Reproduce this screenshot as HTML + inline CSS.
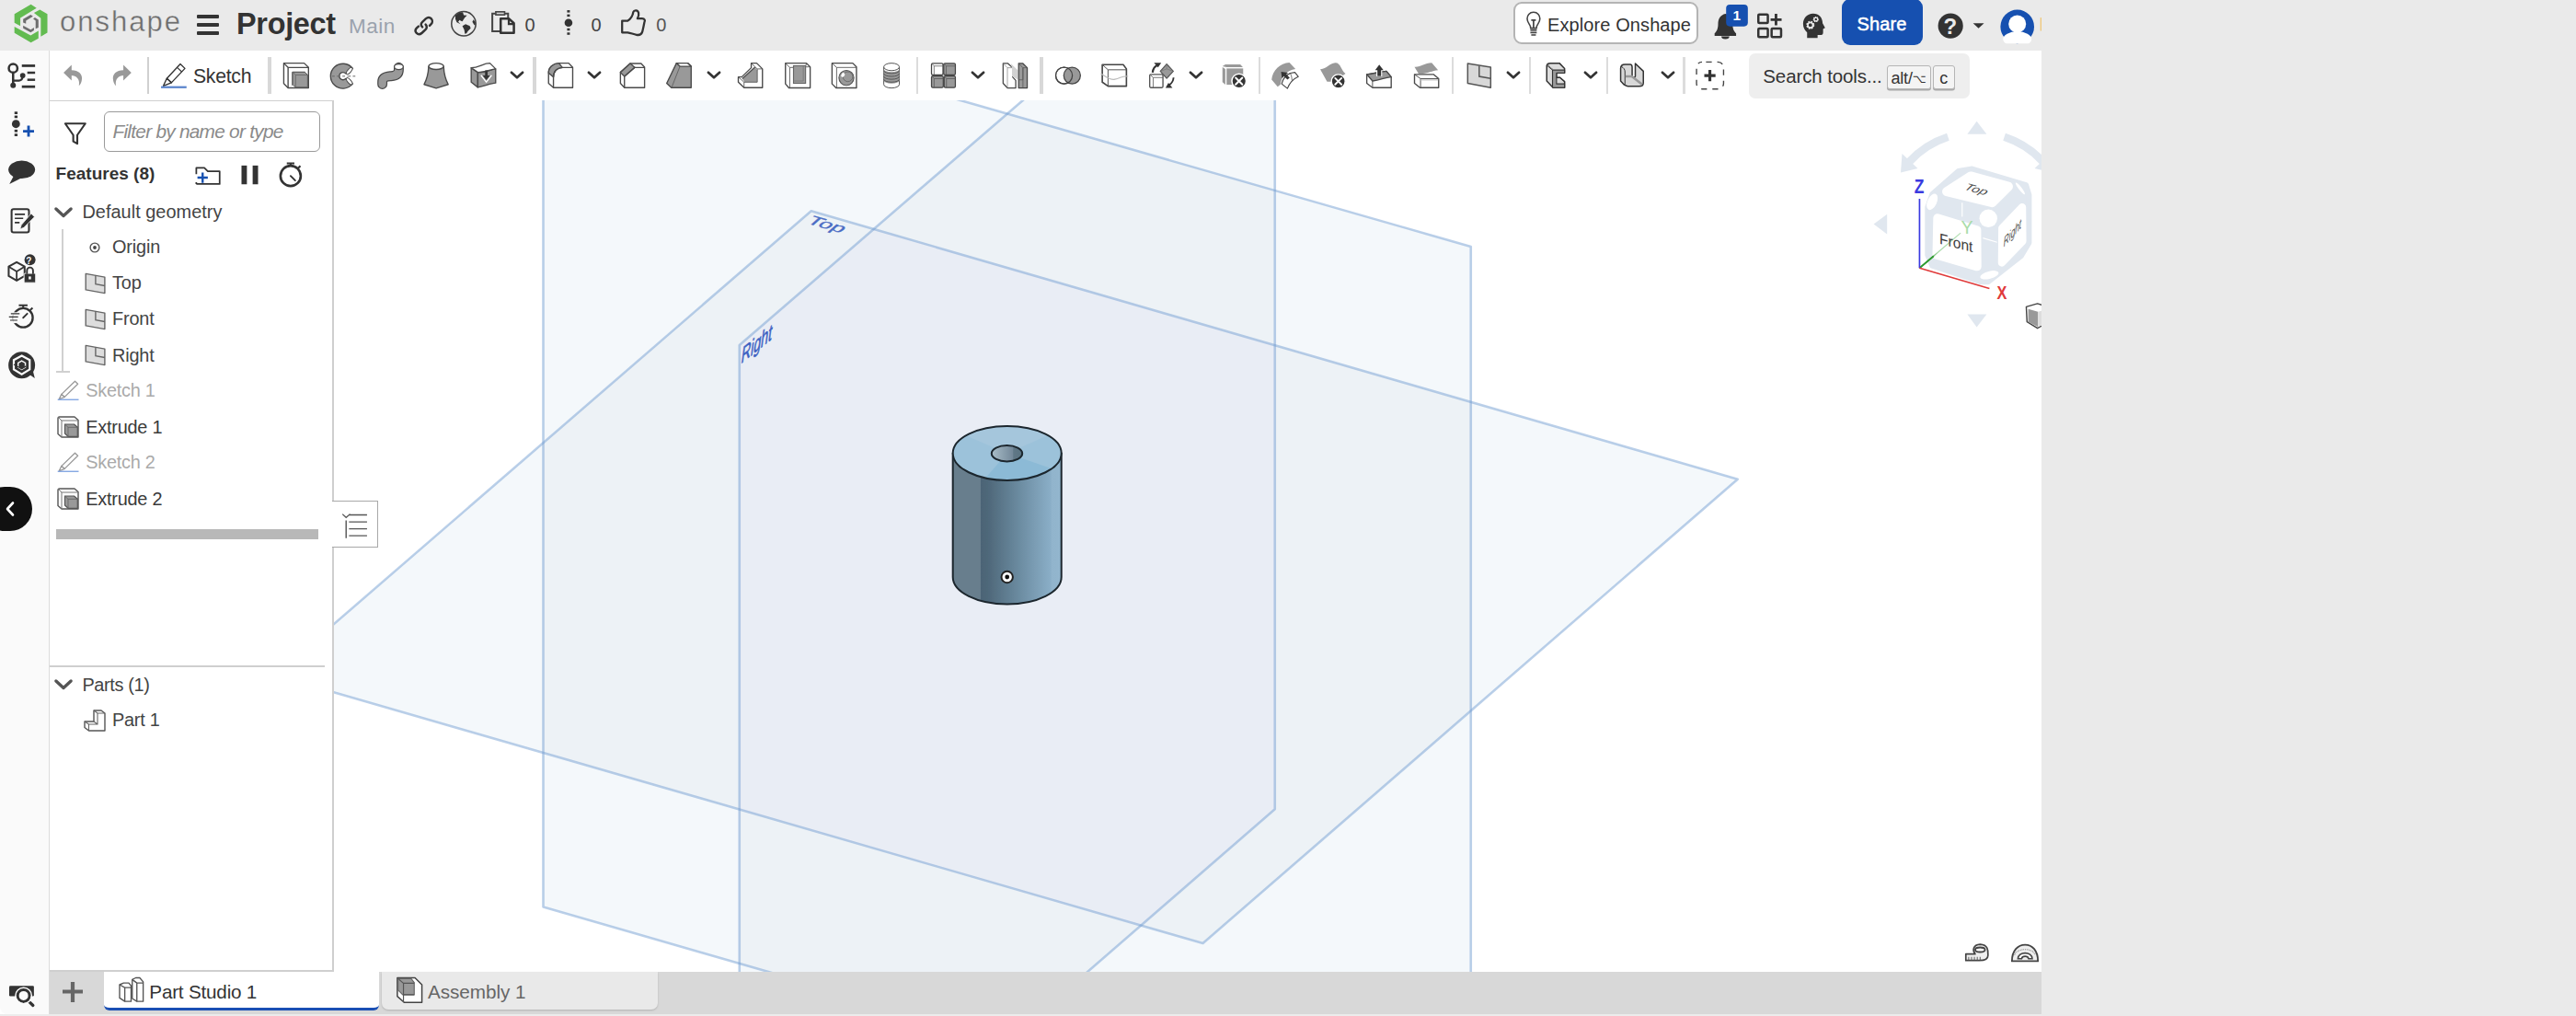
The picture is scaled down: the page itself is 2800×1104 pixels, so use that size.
<!DOCTYPE html>
<html lang="en">
<head>
<meta charset="utf-8">
<title>Project | Part Studio 1</title>
<style>
*{box-sizing:border-box;margin:0;padding:0}
html,body{width:2800px;height:1104px;overflow:hidden;background:#eaeaea}
body{font-family:"Liberation Sans",sans-serif;color:#333;position:relative}
.abs{position:absolute}
#app{position:absolute;left:0;top:0;width:2219px;height:1104px;background:#fff;overflow:hidden}
#header{position:absolute;left:0;top:0;width:2219px;height:55px;background:#eaeaea}
#toolbar{position:absolute;left:54px;top:55px;width:2165px;height:54px;background:#fff}
#sidebar{position:absolute;left:0;top:55px;width:54px;height:1047px;background:#fafafa;border-right:1.5px solid #dcdcdc;border-bottom-left-radius:8px}
#canvas{position:absolute;left:54px;top:109px;width:2165px;height:947px;background:#fff;overflow:hidden}
#panel{position:absolute;left:54px;top:109px;width:309px;height:947px;background:#fff;border:2px solid #cfcfcf;border-top-width:1px;border-left:none}
#tabbar{position:absolute;left:54px;top:1056px;width:2165px;height:46px;background:#d8d8d8}
#bottomstrip{position:absolute;left:0;top:1101.5px;width:2219px;height:3px;background:#ececec}
.t{position:absolute;white-space:nowrap;line-height:1}
svg{position:absolute;overflow:visible}
</style>
</head>
<body>
<div id="app">

<!-- CANVAS -->
<div id="canvas">
<svg id="scene" style="left:-54px;top:-109px" width="2219" height="1104" viewBox="0 0 2219 1104">
<defs>
<clipPath id="cT"><polygon points="881.75,229.25 1888.75,520.75 1307.50,1025.00 298.60,733.70"/></clipPath>
<clipPath id="cF"><polygon points="590.50,-20.90 1598.75,268.00 1598.75,1275.90 590.50,985.50"/></clipPath>
<clipPath id="cR"><polygon points="803.75,375.00 1385.75,-127.50 1385.75,879.25 803.75,1384.40"/></clipPath>
<linearGradient id="gSide" x1="0" x2="1" y1="0" y2="0">
<stop offset="0" stop-color="#687e8d"/><stop offset="0.252" stop-color="#687e8d"/>
<stop offset="0.258" stop-color="#4c6476"/><stop offset="0.32" stop-color="#4e6779"/>
<stop offset="0.6" stop-color="#6a8a9f"/><stop offset="0.9" stop-color="#8aaec7"/>
<stop offset="0.912" stop-color="#91b4cc"/><stop offset="1" stop-color="#93b6ce"/></linearGradient>
<linearGradient id="gHole" x1="0" x2="1" y1="0" y2="0">
<stop offset="0" stop-color="#a9bdc8"/><stop offset="0.68" stop-color="#74899a"/>
<stop offset="0.72" stop-color="#5f7786"/><stop offset="1" stop-color="#5a7281"/></linearGradient>
<clipPath id="cTopFace"><ellipse cx="1094.7" cy="492.4" rx="59" ry="29.5"/></clipPath>
<filter id="soft" x="-5%" y="-5%" width="110%" height="110%"><feGaussianBlur stdDeviation="0.55"/></filter>
<filter id="soft2" x="-5%" y="-5%" width="110%" height="110%"><feGaussianBlur stdDeviation="0.4"/></filter>
</defs>
<g id="planes">
<polygon points="590.50,-20.90 1598.75,268.00 1598.75,1275.90 590.50,985.50" fill="#f4f8fb"/>
<polygon points="881.75,229.25 1888.75,520.75 1307.50,1025.00 298.60,733.70" fill="#f4f8fb"/>
<polygon points="803.75,375.00 1385.75,-127.50 1385.75,879.25 803.75,1384.40" fill="#f4f8fb"/>
<polygon points="881.75,229.25 1888.75,520.75 1307.50,1025.00 298.60,733.70" fill="#edf2f6" clip-path="url(#cF)"/>
<polygon points="881.75,229.25 1888.75,520.75 1307.50,1025.00 298.60,733.70" fill="#edf2f6" clip-path="url(#cR)"/>
<polygon points="590.50,-20.90 1598.75,268.00 1598.75,1275.90 590.50,985.50" fill="#edf2f6" clip-path="url(#cR)"/>
<g clip-path="url(#cF)"><polygon points="881.75,229.25 1888.75,520.75 1307.50,1025.00 298.60,733.70" fill="#e9edf5" clip-path="url(#cR)"/></g>
<polygon points="590.50,-20.90 1598.75,268.00 1598.75,1275.90 590.50,985.50" fill="none" stroke="#6f9bd0" stroke-opacity="0.47" stroke-width="2.6" stroke-linejoin="round" filter="url(#soft)"/>
<polygon points="881.75,229.25 1888.75,520.75 1307.50,1025.00 298.60,733.70" fill="none" stroke="#6f9bd0" stroke-opacity="0.47" stroke-width="2.6" stroke-linejoin="round" filter="url(#soft)"/>
<polygon points="803.75,375.00 1385.75,-127.50 1385.75,879.25 803.75,1384.40" fill="none" stroke="#6f9bd0" stroke-opacity="0.47" stroke-width="2.6" stroke-linejoin="round" filter="url(#soft)"/>
<text transform="matrix(0.92,0.265,-0.505,0.446,875.5,242.2)" font-family="Liberation Sans, sans-serif" font-size="26" fill="#4a6cc4" stroke="#4a6cc4" stroke-width="0.5">Top</text>
<text transform="matrix(0.546,-0.438,-0.13,1.0,805.0,395.6)" font-family="Liberation Sans, sans-serif" font-size="26" fill="#3b60c2" stroke="#3b60c2" stroke-width="0.7">Right</text>
</g>
<g id="part" filter="url(#soft2)">
<path d="M1035.7,492.4 L1035.7,627 A59,29.5 0 0 0 1153.7,627 L1153.7,492.4 Z" fill="url(#gSide)" stroke="#1b262d" stroke-width="2" stroke-linejoin="round"/>
<ellipse cx="1094.7" cy="492.4" rx="59" ry="29.5" fill="#9cc2da"/>
<g clip-path="url(#cTopFace)">
<polygon points="1094.7,492.4 1030,465 1100,440 1146,470" fill="#a5c6dc"/>
<polygon points="1094.7,492.4 1062,530 1100,540 1160,515" fill="#8cbad6"/>
</g>
<ellipse cx="1094.7" cy="492.4" rx="59" ry="29.5" fill="none" stroke="#1b262d" stroke-width="2"/>
<ellipse cx="1094.5" cy="492.8" rx="16.7" ry="8.7" fill="url(#gHole)" stroke="#1b262d" stroke-width="2"/>
<circle cx="1094.7" cy="627" r="6.2" fill="#fff" stroke="#222" stroke-width="2"/>
<circle cx="1094.7" cy="627" r="2.4" fill="#111"/>
</g>
<g id="viewcube">
<g fill="#e0e7ef">
<polygon points="2138.4,145.8 2159.4,145.8 2148.6,131.7"/>
<polygon points="2138.4,341.5 2159.4,341.5 2148.6,355.5"/>
<polygon points="2036.6,243.5 2051.2,232.8 2051.2,254.5"/>
<polygon points="2260.6,243.5 2246,232.8 2246,254.5"/>
<polygon points="2066,187.6 2067.5,167 2084.5,183"/>
<polygon points="2230,187.6 2228.5,167 2211.5,183"/>
</g>
<path d="M2117.4,148.8 A99,99 0 0 0 2075.6,175.5" fill="none" stroke="#e0e7ef" stroke-width="8.5"/>
<path d="M2178.6,148.8 A99,99 0 0 1 2220.4,175.5" fill="none" stroke="#e0e7ef" stroke-width="8.5"/>
<svg x="2060" y="170" width="170" height="170" viewBox="0 0 1016 1016" style="position:static;overflow:visible">
<polygon points="500,80 850,185 870,250 870,560 820,645 605,815 555,815 240,710 210,640 210,330 240,245 410,95" fill="#e0e7ef" stroke="#e0e7ef" stroke-width="34" stroke-linejoin="round"/>
<polygon points="335,228 490,128 735,195 630,300" fill="#fff" stroke="#fff" stroke-width="60" stroke-linejoin="round"/>
<polygon points="275,400 530,478 532,715 270,640" fill="#fff" stroke="#fff" stroke-width="56" stroke-linejoin="round"/>
<polygon points="695,465 825,330 827,550 693,690" fill="#fff" stroke="#fff" stroke-width="50" stroke-linejoin="round"/>
<circle cx="605" cy="402" r="58" fill="#fff"/>
<ellipse cx="240" cy="295" rx="30" ry="56" transform="rotate(25 240 295)" fill="#fff"/>
<ellipse cx="612" cy="770" rx="62" ry="24" transform="rotate(-15 612 770)" fill="#fff"/>
<ellipse cx="812" cy="208" rx="10" ry="48" transform="rotate(-38 812 208)" fill="#fff"/>
<path d="M435,300 V392 M570,530 L662,557" stroke="#fff" stroke-width="7" fill="none"/>
<defs><linearGradient id="gY" gradientUnits="userSpaceOnUse" x1="158" y1="725" x2="425" y2="497"><stop offset="0" stop-color="#2f9a2f"/><stop offset="0.3" stop-color="#55b355"/><stop offset="0.45" stop-color="#a6d8a6"/><stop offset="1" stop-color="#b4dfb4"/></linearGradient></defs>
<path d="M158,725 L425,497" stroke="url(#gY)" stroke-width="7"/>
<path d="M158,725 L250,647" stroke="#2f9a2f" stroke-width="11"/>
<path d="M158,275 V725" stroke="#3a3ae0" stroke-width="10"/>
<path d="M158,725 L612,858" stroke="#e03a3a" stroke-width="9.5"/>
<text transform="translate(124 238) scale(0.82 1)" font-family="Liberation Sans, sans-serif" font-size="128" font-weight="bold" fill="#3a3ae0">Z</text>
<text transform="translate(660 925) scale(0.8 1)" font-family="Liberation Sans, sans-serif" font-size="122" font-weight="bold" fill="#e03a3a">X</text>
<text x="428" y="500" font-family="Liberation Sans, sans-serif" font-size="118" fill="#a9dca9">Y</text>
<text transform="matrix(0.95,0.28,-0.42,0.62,444,212)" font-family="Liberation Sans, sans-serif" font-size="92" font-style="italic" fill="#4a4a4a">Top</text>
<text transform="matrix(0.95,0.245,0,1,287,566)" font-family="Liberation Sans, sans-serif" font-size="98" fill="#3d3d3d">Front</text>
<text transform="matrix(0.54,-0.6,0,0.95,704,590)" font-family="Liberation Sans, sans-serif" font-size="92" font-style="italic" fill="#4a4a4a">Right</text>
</svg>
<svg x="2180" y="315" width="50" height="55" viewBox="0 0 924 1016" style="position:static;overflow:visible">
<polygon points="415,340 640,275 860,340 860,650 640,770 430,640" fill="#fff" stroke="#444" stroke-width="26" stroke-linejoin="round"/>
<polygon points="455,385 650,440 650,745 455,640" fill="#999"/>
<polygon points="650,440 850,385 850,640 650,745" fill="#ddd"/>
</svg>
</g>
</svg>
</div>

<!-- HEADER -->
<div id="header">
<svg style="left:8px;top:0px" width="60" height="52" viewBox="0 0 1172 1016"><polygon points="150,300 500,95 620,170 275,380 275,550 150,485" fill="#62bb50"/>
<polygon points="565,275 690,205 850,300 850,695 710,775 710,385" fill="#62bb50"/>
<polygon points="150,565 495,750 660,655 660,815 500,905 150,700" fill="#62bb50"/>
<polygon points="335,405 495,315 545,345 395,440 395,505 335,480" fill="#6e6e6e"/>
<polygon points="548,400 585,370 660,420 660,585 600,610 600,440" fill="#6e6e6e"/>
<polygon points="335,540 495,630 565,585 565,645 495,690 335,600" fill="#6e6e6e"/></svg>
<div class="t" style="left:65px;top:8.18px;font-size:31px;color:#6d6d6d;font-weight:normal;letter-spacing:2px;font-style:normal;-webkit-text-stroke:0.35px #eaeaea;">onshape</div>
<div class="abs" style="left:214px;top:16px;width:24px;height:4px;background:#333;border-radius:1px"></div>
<div class="abs" style="left:214px;top:25px;width:24px;height:4.4px;background:#333;border-radius:1px"></div>
<div class="abs" style="left:214px;top:34.3px;width:24px;height:4px;background:#333;border-radius:1px"></div>
<div class="t" style="left:257px;top:9.52px;font-size:32.4px;color:#333;font-weight:bold;letter-spacing:-0.284px;font-style:normal;">Project</div>
<div class="t" style="left:379px;top:18.34px;font-size:22.5px;color:#9aa2ad;font-weight:normal;letter-spacing:0.52px;font-style:normal;">Main</div>
<svg style="left:440px;top:4px" width="130" height="44" viewBox="0 0 2576 872"><g fill="none" stroke="#333" stroke-width="54" stroke-linecap="round" transform="translate(412 478) scale(0.9) translate(-412 -472)">
<path d="M375,500 C330,455 335,415 375,378 L455,303 C500,263 555,265 590,303 C625,343 615,400 580,435 L548,468"/>
<path d="M452,440 C492,482 482,530 450,560 L365,640 C320,680 270,680 235,645 C200,605 205,555 240,520 L283,482"/></g>
<circle cx="1268" cy="432" r="262" fill="none" stroke="#444" stroke-width="30"/>
<polygon points="1090,250 1180,190 1250,185 1270,250 1340,255 1290,300 1240,380 1210,370 1180,350 1150,390 1200,440 1120,400 1090,330" fill="#333"/>
<polygon points="1240,480 1310,440 1400,480 1420,530 1360,590 1330,640 1295,650 1280,560" fill="#333"/>
<polygon points="1480,340 1520,400 1520,470 1490,450 1455,390" fill="#333"/>
<path d="M1955,215 H1885 V595 H2060 M2150,215 H2225 V300" fill="none" stroke="#444" stroke-width="40"/>
<rect x="1960" y="175" width="190" height="65" fill="#d8d8d8" stroke="#444" stroke-width="32"/>
<path d="M2065,320 H2240 L2350,420 V630 H2065 Z" fill="#eaeaea" stroke="#333" stroke-width="50" stroke-linejoin="round"/>
<path d="M2240,320 V440 H2350" fill="none" stroke="#333" stroke-width="45"/></svg>
<div class="t" style="left:570.6px;top:16.90px;font-size:20px;color:#444;font-weight:normal;letter-spacing:0px;font-style:normal;">0</div>
<svg style="left:600px;top:4px" width="130" height="44" viewBox="0 0 2576 872"><circle cx="355" cy="410" r="85" fill="#333"/>
<rect x="325" y="140" width="60" height="50" fill="#333"/><rect x="325" y="230" width="60" height="50" fill="#333"/>
<rect x="325" y="530" width="60" height="50" fill="#333"/><rect x="325" y="620" width="60" height="50" fill="#333"/>
<path d="M1510,370 H1630 C1690,330 1740,250 1750,180 C1770,130 1850,130 1865,200 C1875,250 1860,290 1840,320 H1940 C2000,320 2010,370 1990,400 C1975,470 1960,560 1940,620 C1920,670 1870,680 1820,670 C1750,660 1700,630 1630,620 H1510 Z" fill="none" stroke="#333" stroke-width="45" stroke-linejoin="round"/></svg>
<div class="t" style="left:642.4px;top:16.90px;font-size:20px;color:#444;font-weight:normal;letter-spacing:0px;font-style:normal;">0</div>
<div class="t" style="left:713.2px;top:16.90px;font-size:20px;color:#555;font-weight:normal;letter-spacing:0px;font-style:normal;">0</div>
<div class="abs" style="left:1645px;top:2px;width:201px;height:45.5px;background:#fff;border:2px solid #b4b4b4;border-radius:9px"></div>
<svg style="left:1659px;top:12.3px" width="15.8" height="27.1" viewBox="0 0 100 172"><path d="M50,8 C22,8 6,30 6,52 C6,75 22,88 28,105 L30,118 H70 L72,105 C78,88 94,75 94,52 C94,30 78,8 50,8 Z" fill="none" stroke="#444" stroke-width="10"/>
<path d="M34,62 H66 M50,62 V115" stroke="#444" stroke-width="11" fill="none"/>
<rect x="28" y="126" width="44" height="11" fill="#444"/><rect x="28" y="143" width="44" height="11" fill="#444"/><rect x="34" y="160" width="32" height="10" fill="#444"/></svg>
<div class="t" style="left:1682px;top:16.90px;font-size:20px;color:#333;font-weight:normal;letter-spacing:0.1px;font-style:normal;">Explore Onshape</div>
<svg style="left:1855px;top:2px" width="140" height="48" viewBox="0 0 2576 883"><path d="M375,240 C280,260 230,340 230,440 C230,540 200,590 160,630 V680 H590 V630 C550,590 520,540 520,440 C520,340 470,260 375,240 Z" fill="#333"/>
<path d="M295,690 A80,55 0 0 0 455,690 Z" fill="#333"/>
<rect x="390" y="55" width="435" height="435" rx="75" fill="#1650b0"/>
<g fill="none" stroke="#333" stroke-width="46"><rect x="1035" y="255" width="190" height="170" rx="18"/><rect x="1035" y="535" width="190" height="170" rx="18"/><rect x="1300" y="535" width="190" height="170" rx="18"/>
<path d="M1280,355 H1500 M1388,240 V470" stroke-width="52"/></g>
<path d="M2130,235 C2010,235 1930,330 1930,440 C1930,520 1970,570 2010,610 V720 H2220 V660 H2290 C2320,660 2330,640 2330,610 V545 L2370,520 L2320,430 C2320,320 2250,235 2130,235 Z" fill="#333"/>
<circle cx="2075" cy="465" r="62" fill="none" stroke="#eaeaea" stroke-width="42" stroke-dasharray="30 19"/><circle cx="2075" cy="465" r="52" fill="none" stroke="#eaeaea" stroke-width="30"/>
<circle cx="2185" cy="350" r="42" fill="none" stroke="#eaeaea" stroke-width="30" stroke-dasharray="20 13"/><circle cx="2185" cy="350" r="35" fill="none" stroke="#eaeaea" stroke-width="22"/></svg>
<div class="t" style="left:1883.6px;top:9.41px;font-size:15.5px;color:#fff;font-weight:bold;letter-spacing:0px;font-style:normal;">1</div>
<div class="abs" style="left:2002px;top:-1px;width:87.5px;height:49.8px;background:#1650b0;border-radius:9px"></div>
<div class="t" style="left:2018.6px;top:15.80px;font-size:20px;color:#fff;font-weight:normal;letter-spacing:0.1px;font-style:normal;-webkit-text-stroke:0.5px #fff;">Share</div>
<svg style="left:2090px;top:2px" width="140" height="48" viewBox="0 0 2576 883"><circle cx="555" cy="480" r="250" fill="#333"/>
<polygon points="1005,430 1225,430 1115,530" fill="#333"/>
<clipPath id="avc"><rect x="1500" y="100" width="800" height="733"/></clipPath>
<circle cx="1890" cy="495" r="337" fill="#1650b0"/>
<circle cx="1890" cy="440" r="175" fill="#fff"/><ellipse cx="1890" cy="745" rx="285" ry="150" fill="#fff" clip-path="url(#avc)"/>
<rect x="2350" y="315" width="24" height="265" fill="#f0c777"/></svg>
<div class="t" style="left:2112.6px;top:16.80px;font-size:24px;color:#eaeaea;font-weight:bold;letter-spacing:0px;font-style:normal;">?</div>
</div>

<!-- TOOLBAR -->
<div id="toolbar">
<svg style="left:-54px;top:3px" width="161" height="50" viewBox="0 0 2576 800"><path d="M1105,335 L1245,200 V290 C1370,290 1430,360 1425,440 C1422,500 1400,540 1372,565 C1385,500 1380,400 1245,385 V470 Z" fill="#999"/>
<path d="M2285,335 L2145,200 V290 C2020,290 1960,360 1965,440 C1968,500 1990,540 2018,565 C2005,500 2010,400 2145,385 V470 Z" fill="#999"/></svg>
<div class="abs" style="left:106.3px;top:7.4px;width:1.5px;height:39.4px;background:#d0d0d0"></div>
<svg style="left:107px;top:3px" width="161" height="50" viewBox="0 0 2576 800"><polygon points="560,185 640,262 405,510 325,435" fill="#fff" stroke="#333" stroke-width="22" stroke-linejoin="round"/>
<polygon points="325,435 405,510 265,565" fill="#fff" stroke="#333" stroke-width="22" stroke-linejoin="round"/>
<path d="M505,245 L585,320" stroke="#333" stroke-width="18"/>
<rect x="225" y="570" width="443" height="36" fill="#5b84cc"/></svg>
<div class="t" style="left:156px;top:17.41px;font-size:21.2px;color:#333;font-weight:normal;letter-spacing:-0.26px;font-style:normal;">Sketch</div>
<div class="abs" style="left:237.3px;top:7.4px;width:3.6px;height:39.4px;background:#d8d8d8"></div>
<svg style="left:246px;top:3px" width="161" height="50" viewBox="0 0 2576 800"><polygon points="135,170 490,170 565,245 565,600 210,600 135,525" fill="#fff" stroke="#4a4a4a" stroke-width="22" stroke-linejoin="round"/>
<path d="M135,170 L210,245 H565 M210,245 V600" fill="none" stroke="#4a4a4a" stroke-width="22" stroke-linejoin="round"/>
<path d="M280,560 V325 H510" fill="none" stroke="#777" stroke-width="14"/>
<polygon points="290,325 500,325 550,375 550,590 340,590 290,540" fill="#999" stroke="#555" stroke-width="16" stroke-linejoin="round"/>
<path d="M290,325 L340,375 H550 M340,375 V590" fill="none" stroke="#666" stroke-width="14"/>
<path d="M1334,263 A215,215 0 1 0 1334,527 L1212,440 A65,65 0 1 1 1212,350 Z" fill="#999" stroke="#4a4a4a" stroke-width="22" stroke-linejoin="round"/>
<ellipse cx="1275" cy="305" rx="72" ry="30" transform="rotate(-48 1275 305)" fill="#fff" stroke="#4a4a4a" stroke-width="16"/>
<ellipse cx="1275" cy="485" rx="72" ry="30" transform="rotate(48 1275 485)" fill="#fff" stroke="#4a4a4a" stroke-width="16"/>
<path d="M975,397 H1380" stroke="#666" stroke-width="16" stroke-dasharray="45 40 60 35"/>
<path d="M1850,535 V500 C1850,400 1940,400 2000,395 C2080,390 2135,360 2135,280 V245" fill="none" stroke="#4a4a4a" stroke-width="175" stroke-linecap="round"/>
<path d="M1850,535 V500 C1850,400 1940,400 2000,395 C2080,390 2135,360 2135,280 V245" fill="none" stroke="#999" stroke-width="135" stroke-linecap="round"/>
<ellipse cx="2135" cy="232" rx="78" ry="48" fill="#fff" stroke="#4a4a4a" stroke-width="20"/></svg>
<svg style="left:401px;top:3px" width="161" height="50" viewBox="0 0 2576 800"><path d="M175,225 C170,330 150,440 95,540 L305,605 L515,540 C460,440 440,330 435,225 Z" fill="#999" stroke="#4a4a4a" stroke-width="22" stroke-linejoin="round"/>
<ellipse cx="305" cy="225" rx="130" ry="55" fill="#fff" stroke="#4a4a4a" stroke-width="22" stroke-linejoin="round"/>
<path d="M915,250 L1030,330 V590 L915,500 Z" fill="#999" stroke="#4a4a4a" stroke-width="22" stroke-linejoin="round"/>
<path d="M1030,330 C1150,330 1250,280 1340,270 V515 C1250,520 1150,570 1030,590 Z" fill="#999" stroke="#4a4a4a" stroke-width="22" stroke-linejoin="round"/>
<path d="M915,250 C1050,250 1120,170 1240,170 L1340,270 C1250,280 1150,330 1030,330 Z" fill="#fff" stroke="#4a4a4a" stroke-width="22" stroke-linejoin="round"/>
<path d="M1085,380 L1178,500 L1270,380" fill="none" stroke="#fff" stroke-width="20"/>
<path d="M1178,295 V420" stroke="#333" stroke-width="44"/><polygon points="1115,385 1240,385 1178,465" fill="#333"/></svg>
<svg style="left:498.4px;top:20px" width="20" height="14" viewBox="0 0 20 14"><path d="M3.9,3.8 L10,9.3 L16.1,3.8" fill="none" stroke="#333" stroke-width="2.7" stroke-linecap="round" stroke-linejoin="round"/></svg>
<div class="abs" style="left:525px;top:7.4px;width:3.5px;height:39.4px;background:#d8d8d8"></div>
<svg style="left:531px;top:3px" width="161" height="50" viewBox="0 0 2576 800"><path d="M180,340 C180,240 260,175 360,170 H530 L600,245 V595 H265 L180,520 Z" fill="#fff" stroke="#4a4a4a" stroke-width="22" stroke-linejoin="round"/>
<path d="M180,340 C180,240 260,175 360,170 L420,245 C330,250 265,310 265,410 Z" fill="#999" stroke="#4a4a4a" stroke-width="22" stroke-linejoin="round"/>
<path d="M265,595 V420 C265,310 330,250 430,245 H600" fill="none" stroke="#4a4a4a" stroke-width="22" stroke-linejoin="round"/>
<path d="M1430,330 L1600,175 H1790 L1850,240 V595 H1500 L1430,520 Z" fill="#fff" stroke="#4a4a4a" stroke-width="22" stroke-linejoin="round"/>
<polygon points="1430,330 1600,175 1680,245 1500,400" fill="#999" stroke="#4a4a4a" stroke-width="22" stroke-linejoin="round"/>
<path d="M1500,595 V400 L1680,245 H1850" fill="none" stroke="#4a4a4a" stroke-width="22" stroke-linejoin="round"/></svg>
<svg style="left:582.4px;top:20px" width="20" height="14" viewBox="0 0 20 14"><path d="M3.9,3.8 L10,9.3 L16.1,3.8" fill="none" stroke="#333" stroke-width="2.7" stroke-linecap="round" stroke-linejoin="round"/></svg>
<svg style="left:661px;top:3px" width="161" height="50" viewBox="0 0 2576 800"><polygon points="155,520 325,170 520,170 580,225 580,595 235,595" fill="#999" stroke="#4a4a4a" stroke-width="22" stroke-linejoin="round"/>
<polygon points="325,170 520,170 580,225 385,225" fill="#fff" stroke="#4a4a4a" stroke-width="22" stroke-linejoin="round"/>
<path d="M385,225 L240,595" stroke="#555" stroke-width="12"/>
<polygon points="1625,170 1720,170 1820,270 1820,595 1500,595 1400,500 1400,410 1460,410 1625,250" fill="#fff" stroke="#4a4a4a" stroke-width="22" stroke-linejoin="round"/>
<polygon points="1470,440 1690,240 1730,290 1730,500 1510,500" fill="#999"/>
<path d="M1470,440 L1690,240" stroke="#555" stroke-width="26"/>
<path d="M1400,410 L1500,500 V595 M1500,500 H1730 M1625,170 L1730,270 H1820 M1730,270 V500" fill="none" stroke="#555" stroke-width="14"/></svg>
<svg style="left:711.75px;top:20px" width="20" height="14" viewBox="0 0 20 14"><path d="M3.9,3.8 L10,9.3 L16.1,3.8" fill="none" stroke="#333" stroke-width="2.7" stroke-linecap="round" stroke-linejoin="round"/></svg>
<svg style="left:791px;top:3px" width="161" height="50" viewBox="0 0 2576 800"><polygon points="140,170 505,170 570,235 570,600 200,600 140,530" fill="#fff" stroke="#4a4a4a" stroke-width="22" stroke-linejoin="round"/>
<path d="M140,170 L215,245 V600 M215,245 H275 M495,235 H570 M505,170 L495,215" fill="none" stroke="#555" stroke-width="14"/>
<rect x="280" y="215" width="210" height="305" fill="#999" stroke="#666" stroke-width="18"/>
<path d="M450,225 V480 H290" fill="none" stroke="#777" stroke-width="12"/>
<polygon points="950,170 1310,170 1375,235 1375,600 1020,600 950,530" fill="#fff" stroke="#4a4a4a" stroke-width="22" stroke-linejoin="round"/>
<path d="M950,170 L1030,245 H1375 M1030,245 V600" fill="none" stroke="#555" stroke-width="14"/>
<circle cx="1200" cy="425" r="130" fill="#999" stroke="#555" stroke-width="18"/>
<circle cx="1225" cy="405" r="85" fill="none" stroke="#666" stroke-width="14"/>
<ellipse cx="1140" cy="375" rx="28" ry="40" transform="rotate(35 1140 375)" fill="#fff"/>
<path d="M1850,235 V540 A135,62 0 0 0 2120,540 V235" fill="#fff" stroke="#555" stroke-width="16"/>
<path d="M1850,270 A135,55 0 0 0 2120,270 V470 A135,55 0 0 1 1850,470 Z" fill="#999"/>
<g fill="none" stroke="#555" stroke-width="16"><path d="M1850,300 A135,50 0 0 0 2120,300"/><path d="M1850,350 A135,50 0 0 0 2120,350"/><path d="M1850,400 A135,50 0 0 0 2120,400"/><path d="M1850,450 A135,50 0 0 0 2120,450"/></g>
<ellipse cx="1985" cy="235" rx="135" ry="65" fill="#fff" stroke="#555" stroke-width="16"/></svg>
<div class="abs" style="left:942.3px;top:7.4px;width:2.1px;height:39.4px;background:#dcdcdc"></div>
<svg style="left:946px;top:3px" width="161" height="50" viewBox="0 0 2576 800"><rect x="200" y="175" width="200" height="200" rx="22" fill="#fff" stroke="#444" stroke-width="20" stroke-linejoin="round"/>
<rect x="412" y="175" width="203" height="200" rx="22" fill="#999" stroke="#444" stroke-width="20" stroke-linejoin="round"/>
<rect x="200" y="395" width="205" height="200" rx="22" fill="#999" stroke="#444" stroke-width="20" stroke-linejoin="round"/>
<rect x="420" y="395" width="195" height="200" rx="22" fill="#999" stroke="#444" stroke-width="20" stroke-linejoin="round"/>
<path d="M205,180 L245,220 H400 M245,220 V375 M417,180 L455,220 H615 M455,220 V375 M205,400 L245,440 H405 M245,440 V595 M425,400 L460,440 H615 M460,440 V595" fill="none" stroke="#555" stroke-width="12"/>
<polygon points="1445,175 1530,175 1610,250 1610,410 1665,470 1665,600 1520,600 1445,520" fill="#fff" stroke="#444" stroke-width="20" stroke-linejoin="round"/>
<path d="M1445,175 L1520,250 V600 M1520,250 H1610" fill="none" stroke="#888" stroke-width="12"/>
<polygon points="1580,175 1700,290 1700,450 1600,400 1600,250" fill="#d2d2d2"/>
<polygon points="1715,175 1790,175 1865,250 1865,600 1715,600" fill="#999" stroke="#444" stroke-width="20" stroke-linejoin="round"/>
<path d="M1715,175 L1790,250 V600 M1790,250 H1865 M1790,250 V460 H1715" fill="none" stroke="#555" stroke-width="12"/></svg>
<svg style="left:999.4px;top:20px" width="20" height="14" viewBox="0 0 20 14"><path d="M3.9,3.8 L10,9.3 L16.1,3.8" fill="none" stroke="#333" stroke-width="2.7" stroke-linecap="round" stroke-linejoin="round"/></svg>
<div class="abs" style="left:1076.3px;top:7.4px;width:3.45px;height:39.4px;background:#d8d8d8"></div>
<svg style="left:1086px;top:3px" width="161" height="50" viewBox="0 0 2576 800"><circle cx="265" cy="385" r="145" fill="#fff" stroke="#444" stroke-width="20" stroke-linejoin="round"/>
<circle cx="405" cy="385" r="145" fill="#999" stroke="#444" stroke-width="20" stroke-linejoin="round"/>
<circle cx="265" cy="385" r="145" fill="none" stroke="#444" stroke-width="20" stroke-linejoin="round"/>
<polygon points="930,195 1295,195 1350,270 1350,570 1030,570 930,500" fill="#fff" stroke="#444" stroke-width="26" stroke-linejoin="round"/>
<path d="M930,195 L1030,285 H1350 M1030,285 V570" fill="none" stroke="#555" stroke-width="16"/>
<path d="M905,355 C1000,400 1050,470 1150,450 C1250,430 1290,380 1380,400" fill="none" stroke="#bbb" stroke-width="20"/>
<rect x="1755" y="365" width="230" height="230" rx="18" fill="#fff" stroke="#555" stroke-width="22"/>
<path d="M1760,370 L1815,420 H1985 M1815,420 V595" fill="none" stroke="#666" stroke-width="14"/>
<polygon points="2050,185 2165,310 2050,435 1940,310" fill="#999" stroke="#555" stroke-width="20" stroke-linejoin="round"/>
<path d="M1945,310 L2050,270 L2160,310 M2050,270 V190" fill="none" stroke="#777" stroke-width="12"/>
<path d="M1805,335 C1810,270 1850,220 1900,200" fill="none" stroke="#333" stroke-width="34"/>
<polygon points="1830,165 1955,165 1900,245" fill="#333"/>
<path d="M2170,420 C2165,470 2140,520 2095,550" fill="none" stroke="#333" stroke-width="30"/>
<polygon points="2030,600 2150,600 2080,510" fill="#333"/></svg>
<svg style="left:1235.7px;top:20px" width="20" height="14" viewBox="0 0 20 14"><path d="M3.9,3.8 L10,9.3 L16.1,3.8" fill="none" stroke="#333" stroke-width="2.7" stroke-linecap="round" stroke-linejoin="round"/></svg>
<svg style="left:1226px;top:3px" width="161" height="50" viewBox="0 0 2576 800"><polygon points="780,225 830,190 1090,190 1135,240 850,240" fill="#999"/>
<polygon points="780,240 830,270 830,545 780,500" fill="#999"/>
<rect x="852" y="262" width="288" height="283" fill="#999"/>
<circle cx="1068" cy="480" r="125" fill="#333" stroke="#fff" stroke-width="24"/>
<path d="M1010,425 L1125,540 M1125,425 L1010,540" stroke="#fff" stroke-width="32" stroke-linecap="round"/>
<path d="M1635,455 C1650,300 1780,170 1945,160 L2050,270 C1900,290 1800,400 1790,540 L1740,580 Z" fill="#999"/>
<path d="M1810,530 C1830,450 1880,380 1960,345 L2040,330 L2100,405 C2020,440 1950,510 1910,610 Z" fill="#fff" stroke="#444" stroke-width="18" stroke-linejoin="round"/>
<path d="M1860,400 L1960,345 M1960,345 C1975,380 1985,400 1990,470" fill="none" stroke="#444" stroke-width="12"/>
<path d="M1800,320 L1920,335 L1890,365 L1950,425 L1910,455 L1850,395 L1815,430 Z" fill="#333"/></svg>
<div class="abs" style="left:1314px;top:7.4px;width:2px;height:39.4px;background:#dcdcdc"></div>
<svg style="left:1366px;top:3px" width="161" height="50" viewBox="0 0 2576 800"><path d="M240,275 C350,280 400,170 500,165 C600,160 600,300 680,350 L480,490 L360,490 Z" fill="#999"/>
<circle cx="555" cy="485" r="120" fill="#333" stroke="#fff" stroke-width="22"/>
<path d="M500,430 L610,540 M610,430 L500,540" stroke="#fff" stroke-width="30" stroke-linecap="round"/>
<polygon points="1050,365 1390,310 1475,410 1475,595 1150,595 1050,520" fill="#fff" stroke="#4a4a4a" stroke-width="22" stroke-linejoin="round"/>
<path d="M1050,365 C1150,360 1200,340 1250,330 L1390,310 L1475,410 C1350,420 1300,460 1150,480 Z" fill="#999" stroke="#4a4a4a" stroke-width="22" stroke-linejoin="round"/>
<path d="M1150,470 V595" stroke="#555" stroke-width="16"/>
<path d="M1267,280 V400" stroke="#fff" stroke-width="100"/>
<path d="M1267,285 V395" stroke="#333" stroke-width="64"/><polygon points="1195,292 1340,292 1267,195" fill="#333"/>
<polygon points="1880,365 2210,365 2300,440 2300,595 1975,595 1880,520" fill="#fff" stroke="#4a4a4a" stroke-width="22" stroke-linejoin="round"/>
<path d="M1880,365 L1985,440 H2300 M1985,440 V595" fill="none" stroke="#555" stroke-width="16"/>
<path d="M1990,462 H2290" stroke="#ccc" stroke-width="22"/>
<path d="M1880,235 C2000,240 2050,165 2180,165 L2290,290 C2180,300 2100,360 1950,350 Z" fill="#999"/></svg>
<div class="abs" style="left:1523.8px;top:7.4px;width:2.2px;height:39.4px;background:#dcdcdc"></div>
<svg style="left:1531px;top:3px" width="161" height="50" viewBox="0 0 2576 800"><polygon points="165,175 565,240 565,595 165,520" fill="#d8d8d8" stroke="#555" stroke-width="24" stroke-linejoin="round"/>
<path d="M365,215 V400 L565,435" fill="none" stroke="#555" stroke-width="24"/>
<path d="M1540,215 C1545,180 1570,170 1600,170 L1760,170 L1850,265 V340 H1710 V420 H1770 L1850,490 V595 H1650 L1540,480 Z" fill="#ddd" stroke="#333" stroke-width="24" stroke-linejoin="round"/>
<path d="M1640,290 H1850 V340 H1710 V530 H1850 V595 H1650 L1640,585 Z" fill="#999" stroke="#333" stroke-width="18" stroke-linejoin="round"/>
<path d="M1545,210 L1640,290 M1640,290 V585 M1710,420 H1770 L1850,490 V530" fill="none" stroke="#333" stroke-width="16"/>
<path d="M1560,190 C1590,240 1620,260 1650,280" fill="none" stroke="#555" stroke-width="12"/></svg>
<svg style="left:1581px;top:20px" width="20" height="14" viewBox="0 0 20 14"><path d="M3.9,3.8 L10,9.3 L16.1,3.8" fill="none" stroke="#333" stroke-width="2.7" stroke-linecap="round" stroke-linejoin="round"/></svg>
<div class="abs" style="left:1607.6px;top:7.4px;width:2.15px;height:39.4px;background:#dcdcdc"></div>
<svg style="left:1665px;top:20px" width="20" height="14" viewBox="0 0 20 14"><path d="M3.9,3.8 L10,9.3 L16.1,3.8" fill="none" stroke="#333" stroke-width="2.7" stroke-linecap="round" stroke-linejoin="round"/></svg>
<div class="abs" style="left:1691.5px;top:7.4px;width:2.3px;height:39.4px;background:#dcdcdc"></div>
<svg style="left:1686px;top:3px" width="161" height="50" viewBox="0 0 2576 800"><path d="M345,260 C345,210 380,190 420,190 H510 C540,190 545,215 545,240 V400 C545,420 600,420 600,400 V175 L740,310 V510 C740,550 710,570 670,570 H470 C440,570 420,550 400,540 L345,480 Z" fill="#d8d8d8" stroke="#333" stroke-width="24" stroke-linejoin="round"/>
<path d="M355,230 C400,250 420,280 420,320 V540" fill="none" stroke="#333" stroke-width="16"/>
<path d="M430,400 H540 L720,540" fill="none" stroke="#999" stroke-width="40"/>
<rect x="1665" y="150" width="470" height="470" rx="95" fill="none" stroke="#444" stroke-width="22" stroke-dasharray="100 95" stroke-dashoffset="-70"/>
<path d="M1800,385 H1995 M1897,288 V482" stroke="#333" stroke-width="50"/></svg>
<svg style="left:1748.6px;top:20px" width="20" height="14" viewBox="0 0 20 14"><path d="M3.9,3.8 L10,9.3 L16.1,3.8" fill="none" stroke="#333" stroke-width="2.7" stroke-linecap="round" stroke-linejoin="round"/></svg>
<div class="abs" style="left:1775.25px;top:7.4px;width:2.5px;height:39.4px;background:#dcdcdc"></div>
<div class="abs" style="left:1847.3px;top:2.5px;width:239.7px;height:49.3px;background:#eee;border-radius:7px"></div>
<div class="t" style="left:1862.3px;top:17.89px;font-size:20.5px;color:#333;font-weight:normal;letter-spacing:-0.11px;font-style:normal;">Search tools...</div>
<div class="abs" style="left:1997.3px;top:16.2px;width:48px;height:26.2px;background:#f4f4f4;border:1.5px solid #b5b5b5;border-radius:3px;box-shadow:0 1.5px 0 #aaa"></div>
<div class="abs" style="left:2046.6px;top:16.2px;width:24.4px;height:26.2px;background:#f4f4f4;border:1.5px solid #b5b5b5;border-radius:3px;box-shadow:0 1.5px 0 #aaa"></div>
<div class="t" style="left:2001.5px;top:20.65px;font-size:18px;color:#333;font-weight:normal;letter-spacing:-0.2px;font-style:normal;font-family:'Liberation Sans','DejaVu Sans',sans-serif;">alt/<span style="font-size:13px;position:relative;top:-1px">⌥</span></div>
<div class="t" style="left:2054.3px;top:20.65px;font-size:18px;color:#333;font-weight:normal;letter-spacing:0px;font-style:normal;">c</div>
</div>

<!-- SIDEBAR -->
<div id="sidebar">
<svg style="left:0px;top:3px" width="161" height="50" viewBox="0 0 2576 800"><circle cx="228" cy="258" r="75" fill="none" stroke="#333" stroke-width="40"/>
<path d="M228,335 V550" stroke="#333" stroke-width="40"/><circle cx="228" cy="555" r="48" fill="#333"/><circle cx="395" cy="385" r="46" fill="#333"/>
<path d="M228,475 H330 C380,470 395,430 395,385" fill="none" stroke="#333" stroke-width="35"/>
<rect x="380" y="193" width="230" height="44" fill="#333"/><rect x="475" y="316" width="135" height="40" fill="#333"/><rect x="475" y="439" width="135" height="40" fill="#333"/><rect x="380" y="557" width="230" height="44" fill="#333"/></svg>
<svg style="left:0px;top:55px" width="60" height="160" viewBox="0 0 381 1016"><circle cx="110" cy="157" r="28" fill="#333"/>
<rect x="100" y="72" width="21" height="17" fill="#333"/><rect x="100" y="99" width="21" height="17" fill="#333"/><rect x="100" y="196" width="21" height="17" fill="#333"/><rect x="100" y="224" width="21" height="17" fill="#333"/>
<path d="M159,207 H235 M197,169 V245" stroke="#1650b0" stroke-width="18"/>
<ellipse cx="150" cy="472" rx="92" ry="62" fill="#333"/><polygon points="95,515 65,572 150,528" fill="#333"/>
<rect x="80" y="745" width="120" height="160" rx="14" fill="none" stroke="#333" stroke-width="13"/>
<path d="M102,780 H172 M102,808 H160 M102,838 H135" stroke="#333" stroke-width="11"/>
<polygon points="215,775 238,798 165,872 138,882 148,853" fill="#333" stroke="#fafafa" stroke-width="5"/></svg>
<svg style="left:0px;top:215px" width="60" height="160" viewBox="0 0 381 1016"><polygon points="115,95 170,125 170,190 115,222 60,190 60,125" fill="none" stroke="#333" stroke-width="13" stroke-linejoin="round"/>
<path d="M60,125 L115,158 L170,125 M115,158 V222" fill="none" stroke="#333" stroke-width="11"/>
<rect x="166" y="172" width="80" height="64" rx="6" fill="#333" stroke="#fafafa" stroke-width="6"/>
<path d="M186,176 V152 A21,21 0 0 1 228,152 V176" fill="none" stroke="#333" stroke-width="12"/>
<rect x="198" y="193" width="16" height="20" fill="#fafafa"/>
<circle cx="207" cy="78" r="38" fill="#333"/>
<circle cx="160" cy="478" r="66" fill="none" stroke="#333" stroke-width="15"/>
<rect x="90" y="440" width="50" height="75" fill="#fafafa"/>
<path d="M130,392 H190 M160,392 V412 M208,425 L225,410" stroke="#333" stroke-width="13"/>
<path d="M160,478 L188,450" stroke="#333" stroke-width="12" stroke-linecap="round"/>
<path d="M75,450 H135 M62,472 H125 M70,495 H120" stroke="#333" stroke-width="7"/>
<circle cx="150" cy="805" r="92" fill="#333"/><polygon points="190,860 240,895 225,835" fill="#333"/>
<polygon points="150,740 205,770 205,835 150,868 95,835 95,770" fill="none" stroke="#fafafa" stroke-width="14"/>
<polygon points="150,775 175,790 175,820 150,835 125,820 125,790" fill="none" stroke="#fafafa" stroke-width="9"/>
<path d="M95,800 L150,830 L180,812" fill="none" stroke="#333" stroke-width="8"/></svg>
<div class="t" style="left:28.2px;top:223.55px;font-size:10px;color:#fafafa;font-weight:bold;letter-spacing:0px;font-style:normal;">?</div>
<div class="abs" style="left:-19px;top:474px;width:54px;height:48px;background:#111;border-radius:24px"></div>
<svg style="left:5px;top:489px" width="12" height="18" viewBox="0 0 12 18"><path d="M9,2.5 L3,9 L9,15.5" fill="none" stroke="#fff" stroke-width="2.6" stroke-linecap="round" stroke-linejoin="round"/></svg>
<svg style="left:0px;top:965px" width="322" height="84" viewBox="0 0 2576 672"><rect x="80" y="410" width="215" height="90" rx="10" fill="#333"/>
<circle cx="205" cy="495" r="52" fill="#fafafa" stroke="#333" stroke-width="24"/>
<path d="M240,535 L287,580" stroke="#333" stroke-width="26" stroke-linecap="round"/>
<circle cx="205" cy="495" r="70" fill="none" stroke="#fafafa" stroke-width="12"/></svg>
</div>

<!-- FEATURE PANEL -->
<div id="panel">
<svg style="left:0px;top:-2px" width="322" height="127" viewBox="0 0 2576 1016"><polygon points="135,210 310,210 240,310 240,385 205,365 205,310" fill="#fff" stroke="#333" stroke-width="17" stroke-linejoin="round"/>
<path d="M1275,735 V595 H1345 L1375,625 H1478 V735 H1275" fill="#fff" stroke="#333" stroke-width="14" stroke-linejoin="round"/>
<rect x="1262" y="650" width="70" height="70" fill="#fff"/>
<path d="M1285,680 H1375 M1330,635 V725" stroke="#1650b0" stroke-width="19"/>
<rect x="1668" y="575" width="47" height="163" fill="#333"/><rect x="1765" y="575" width="47" height="163" fill="#333"/>
<circle cx="2095" cy="665" r="88" fill="none" stroke="#333" stroke-width="21"/>
<path d="M2062,556 H2128 M2095,556 V580 M2160,598 L2180,578" stroke="#333" stroke-width="17"/>
<path d="M2095,665 L2135,705" stroke="#333" stroke-width="15" stroke-linecap="round"/></svg>
<div class="abs" style="left:59.4px;top:11px;width:235px;height:44px;border:1.5px solid #9a9a9a;border-radius:6px;background:#fff"></div>
<div class="t" style="left:68.5px;top:23.34px;font-size:20.8px;color:#8a8a8a;font-weight:normal;letter-spacing:-0.73px;font-style:italic;">Filter by name or type</div>
<div class="t" style="left:6.6px;top:69.22px;font-size:19px;color:#333;font-weight:bold;letter-spacing:0px;font-style:normal;">Features (8)</div>
<svg style="left:4px;top:113.9px" width="22" height="14" viewBox="0 0 22 14"><path d="M2.9,3 L11,10.5 L19.1,3" fill="none" stroke="#555" stroke-width="3.4" stroke-linecap="round" stroke-linejoin="round"/></svg>
<div class="t" style="left:35.4px;top:110.83px;font-size:19.9px;color:#444;font-weight:normal;letter-spacing:0.04px;font-style:normal;">Default geometry</div>
<div class="abs" style="left:13.1px;top:139.4px;width:2.2px;height:155px;background:#d0d0d0"></div>
<div class="abs" style="left:7.2px;top:293.4px;width:14.5px;height:2px;background:#d0d0d0"></div>
<svg style="left:41.5px;top:151.5px" width="14" height="14" viewBox="0 0 14 14"><circle cx="7" cy="7" r="4.9" fill="#fff" stroke="#555" stroke-width="1.4"/><circle cx="7" cy="7" r="1.9" fill="#444"/></svg>
<div class="t" style="left:68px;top:148.58px;font-size:19.9px;color:#444;font-weight:normal;letter-spacing:-0.16px;font-style:normal;">Origin</div>
<svg style="left:37.5px;top:185.5px" width="24" height="24" viewBox="0 0 24 24"><polygon points="1.2,1.4 21.9,5.1 21.9,22.6 1.2,18.9" fill="#ddd" stroke="#666" stroke-width="1.4" stroke-linejoin="round"/><path d="M11.9,3.3 V12.6 L21.9,14.5" fill="none" stroke="#666" stroke-width="1.4"/></svg>
<div class="t" style="left:68px;top:188.38px;font-size:19.9px;color:#444;font-weight:normal;letter-spacing:-0.12px;font-style:normal;">Top</div>
<svg style="left:37.5px;top:224.6px" width="24" height="24" viewBox="0 0 24 24"><polygon points="1.2,1.4 21.9,5.1 21.9,22.6 1.2,18.9" fill="#ddd" stroke="#666" stroke-width="1.4" stroke-linejoin="round"/><path d="M11.9,3.3 V12.6 L21.9,14.5" fill="none" stroke="#666" stroke-width="1.4"/></svg>
<div class="t" style="left:68px;top:227.48px;font-size:19.9px;color:#444;font-weight:normal;letter-spacing:-0.17px;font-style:normal;">Front</div>
<svg style="left:37.5px;top:263.7px" width="24" height="24" viewBox="0 0 24 24"><polygon points="1.2,1.4 21.9,5.1 21.9,22.6 1.2,18.9" fill="#ddd" stroke="#666" stroke-width="1.4" stroke-linejoin="round"/><path d="M11.9,3.3 V12.6 L21.9,14.5" fill="none" stroke="#666" stroke-width="1.4"/></svg>
<div class="t" style="left:68px;top:266.58px;font-size:19.9px;color:#444;font-weight:normal;letter-spacing:-0.17px;font-style:normal;">Right</div>
<svg style="left:8px;top:303.3px" width="24" height="24" viewBox="0 0 24 24"><polygon points="19.5,1.2 22.6,4.3 8.2,18.4 4.9,15.4" fill="#fff" stroke="#999" stroke-width="1.3" stroke-linejoin="round"/><polygon points="4.9,15.4 8.2,18.4 2.2,20.8" fill="#fff" stroke="#999" stroke-width="1.3" stroke-linejoin="round"/><rect x="0.7" y="20.6" width="22.8" height="1.3" fill="#7aa0e0"/></svg>
<div class="t" style="left:39.2px;top:304.98px;font-size:19.9px;color:#aaa;font-weight:normal;letter-spacing:-0.24px;font-style:normal;">Sketch 1</div>
<svg style="left:8px;top:342.2px" width="24" height="24" viewBox="0 0 24 24"><path d="M1,2.5 Q1,1 2.5,1 H19 L23,4.5 V23 H5 L1,19.5 Z" fill="#fff" stroke="#555" stroke-width="1.4" stroke-linejoin="round"/><path d="M1.5,1.5 L5,5 H23 M5,5 V23" fill="none" stroke="#777" stroke-width="1"/><polygon points="8.5,9 18.5,9 22.3,12.3 22.3,22.3 12,22.3 8.5,19" fill="#999" stroke="#555" stroke-width="1.2" stroke-linejoin="round"/><path d="M8.5,9 L12,12.3 H22.3 M12,12.3 V22.3" fill="none" stroke="#666" stroke-width="0.9"/></svg>
<div class="t" style="left:39.2px;top:344.88px;font-size:19.9px;color:#3a3a3a;font-weight:normal;letter-spacing:-0.23px;font-style:normal;">Extrude 1</div>
<svg style="left:8px;top:381.3px" width="24" height="24" viewBox="0 0 24 24"><polygon points="19.5,1.2 22.6,4.3 8.2,18.4 4.9,15.4" fill="#fff" stroke="#999" stroke-width="1.3" stroke-linejoin="round"/><polygon points="4.9,15.4 8.2,18.4 2.2,20.8" fill="#fff" stroke="#999" stroke-width="1.3" stroke-linejoin="round"/><rect x="0.7" y="20.6" width="22.8" height="1.3" fill="#7aa0e0"/></svg>
<div class="t" style="left:39.2px;top:382.98px;font-size:19.9px;color:#aaa;font-weight:normal;letter-spacing:-0.24px;font-style:normal;">Sketch 2</div>
<svg style="left:8px;top:420px" width="24" height="24" viewBox="0 0 24 24"><path d="M1,2.5 Q1,1 2.5,1 H19 L23,4.5 V23 H5 L1,19.5 Z" fill="#fff" stroke="#555" stroke-width="1.4" stroke-linejoin="round"/><path d="M1.5,1.5 L5,5 H23 M5,5 V23" fill="none" stroke="#777" stroke-width="1"/><polygon points="8.5,9 18.5,9 22.3,12.3 22.3,22.3 12,22.3 8.5,19" fill="#999" stroke="#555" stroke-width="1.2" stroke-linejoin="round"/><path d="M8.5,9 L12,12.3 H22.3 M12,12.3 V22.3" fill="none" stroke="#666" stroke-width="0.9"/></svg>
<div class="t" style="left:39.2px;top:422.68px;font-size:19.9px;color:#3a3a3a;font-weight:normal;letter-spacing:-0.23px;font-style:normal;">Extrude 2</div>
<div class="abs" style="left:7.1px;top:465.4px;width:285.3px;height:10.7px;background:#b8b8b8"></div>
<div class="abs" style="left:0;top:612.75px;width:299.4px;height:2px;background:#cfcfcf"></div>
<svg style="left:4px;top:627px" width="22" height="14" viewBox="0 0 22 14"><path d="M2.9,3 L11,10.5 L19.1,3" fill="none" stroke="#555" stroke-width="3.4" stroke-linecap="round" stroke-linejoin="round"/></svg>
<div class="t" style="left:35.4px;top:624.83px;font-size:19.9px;color:#444;font-weight:normal;letter-spacing:-0.35px;font-style:normal;">Parts (1)</div>
<svg style="left:37px;top:660.8px" width="24" height="24" viewBox="0 0 24 24"><path d="M11,1 H19 L23,4 V23 H5.5 L1,19.5 V13 H11 Z" fill="#fff" stroke="#555" stroke-width="1.4" stroke-linejoin="round"/><path d="M11,1 L15,4 H23 M15,4 V16 H5.5 V23 M1,13 L5.5,16 M11,13 L15,16" fill="none" stroke="#666" stroke-width="1.1"/></svg>
<div class="t" style="left:68px;top:662.98px;font-size:19.9px;color:#444;font-weight:normal;letter-spacing:-0.26px;font-style:normal;">Part 1</div>
</div>

<!-- TAB BAR -->
<div id="tabbar">
<svg style="left:12.8px;top:11px" width="24" height="24" viewBox="0 0 24 24"><path d="M1,10.5 H23 M12,0 V22" stroke="#666" stroke-width="4.2"/></svg>
<div class="abs" style="left:58.5px;top:0;width:299px;height:42px;background:#fff;border-bottom:3px solid #1a4fb4;border-radius:0 0 6px 6px"></div>
<svg style="left:-54px;top:-36px" width="322" height="84" viewBox="0 0 2576 672"><g fill="none" stroke="#555" stroke-width="11" stroke-linejoin="round"><path d="M1040,400 L1075,385 H1120 L1140,410 V545 H1085 L1040,515 Z" fill="#fff"/><path d="M1040,400 L1085,425 H1140 M1085,425 V545"/>
<path d="M1150,355 L1180,340 H1215 L1245,375 V545 H1190 L1150,520 Z" fill="#fff"/><path d="M1150,355 L1190,385 H1245 M1190,385 V545"/></g></svg>
<div class="t" style="left:108.3px;top:11.92px;font-size:20.7px;color:#333;font-weight:normal;letter-spacing:-0.21px;font-style:normal;">Part Studio 1</div>
<div class="abs" style="left:360.9px;top:0;width:300px;height:41px;background:#e9e9e9;border-radius:0 0 7px 7px;box-shadow:0 1px 2px rgba(0,0,0,0.18)"></div>
<svg style="left:246px;top:-16px" width="430" height="64" viewBox="0 0 2576 383"><polygon points="790,135 905,135 950,180 950,295 835,295 790,255" fill="#fff" stroke="#444" stroke-width="9" stroke-linejoin="round"/>
<polygon points="795,140 880,140 900,165 900,245 825,245 795,215" fill="#999" stroke="#666" stroke-width="7" stroke-linejoin="round"/>
<path d="M795,140 L830,170 H900 M830,170 V295 M830,245 H900" fill="none" stroke="#555" stroke-width="7"/></svg>
<div class="t" style="left:411px;top:11.62px;font-size:20.7px;color:#666;font-weight:normal;letter-spacing:-0.04px;font-style:normal;">Assembly 1</div>
</div>
<div id="bottomstrip"></div>

<div class="abs" style="left:361px;top:544.4px;width:50px;height:51px;background:#fff;border:1.5px solid #a8a8a8;border-left:none"></div>
<svg style="left:54px;top:520px" width="366" height="127" viewBox="0 0 2576 894"><g stroke="#555" stroke-width="9" fill="none"><path d="M2290,278 H2428 M2290,332 H2428 M2290,385 H2428 M2290,438 H2428"/><path d="M2268,320 V455" stroke-width="10"/><path d="M2240,272 L2268,298 L2298,272" stroke-width="9"/></g></svg>
<svg style="left:1900px;top:980px" width="400" height="124" viewBox="0 0 2576 799"><path d="M1525,365 H1590 C1570,340 1575,300 1625,297 C1685,300 1680,345 1680,375 C1680,400 1650,410 1620,410 H1525 Z" fill="#eee" stroke="#444" stroke-width="11" stroke-linejoin="round"/>
<ellipse cx="1625" cy="335" rx="34" ry="16" fill="#fff" stroke="#444" stroke-width="12"/>
<path d="M1545,385 V408 M1565,385 V408 M1585,385 V408 M1605,385 V408 M1625,385 V408" stroke="#555" stroke-width="6"/>
<path d="M1848,415 C1848,340 1890,300 1940,300 C1990,300 2030,340 2030,415 Z" fill="#eee" stroke="#444" stroke-width="12" stroke-linejoin="round"/>
<path d="M1890,398 C1890,345 1990,345 1990,398 L1965,398 C1960,375 1920,375 1915,398 Z" fill="#fff" stroke="#444" stroke-width="11"/>
<path d="M1866,372 C1880,322 1995,318 2012,372" fill="none" stroke="#777" stroke-width="7" stroke-dasharray="5 6"/></svg>
</div>
</body>
</html>
